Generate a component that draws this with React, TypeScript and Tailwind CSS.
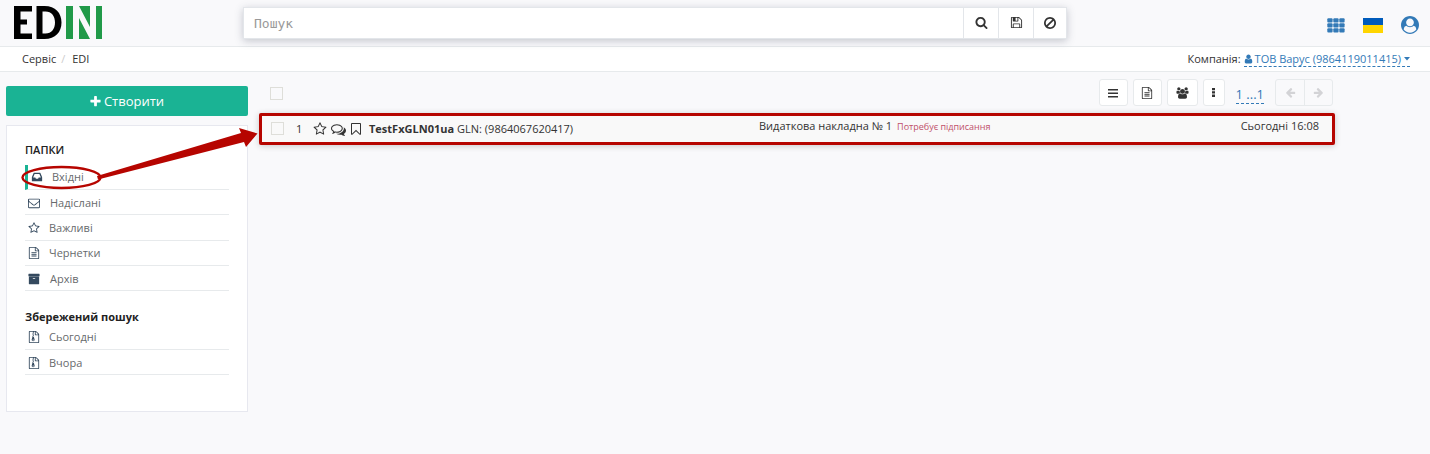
import React from "react";

const P = {
  search:
    "M1216 832q0-185-131.5-316.5t-316.5-131.5-316.5 131.5-131.5 316.5 131.5 316.5 316.5 131.5 316.5-131.5 131.5-316.5zm512 832q0 52-38 90t-90 38q-54 0-90-38l-343-342q-179 124-399 124-143 0-273.5-55.5t-225-150-150-225-55.5-273.5 55.5-273.5 150-225 225-150 273.5-55.5 273.5 55.5 225 150 150 225 55.5 273.5q0 220-124 399l343 343q37 37 37 90z",
  save: "M512 1536h768v-384h-768v384zm896 0h128v-896q0-14-10-38.5t-20-34.5l-281-281q-10-10-34-20t-39-10v416q0 40-28 68t-68 28h-576q-40 0-68-28t-28-68v-416h-128v1280h128v-416q0-40 28-68t68-28h832q40 0 68 28t28 68v416zm-384-928v-320q0-13-9.5-22.5t-22.5-9.5h-192q-13 0-22.5 9.5t-9.5 22.5v320q0 13 9.5 22.5t22.5 9.5h192q13 0 22.5-9.5t9.5-22.5zm640 32v928q0 40-28 68t-68 28h-1344q-40 0-68-28t-28-68v-1344q0-40 28-68t68-28h928q40 0 88 20t76 48l280 280q28 28 48 76t20 88z",
  ban: "M1440 893q0-161-87-295l-754 753q137 89 297 89 111 0 211.5-43.5t173.5-116.5 116-174.5 43-212.5zm-999 299l755-754q-135-91-300-91-148 0-273 73t-198 199-73 274q0 162 89 299zm1223-299q0 157-61 300t-163.5 246-245 164-298.5 61-298.5-61-245-164-163.5-246-61-300 61-299.5 163.5-245.5 245-164 298.5-61 298.5 61 245 164 163.5 245.5 61 299.5z",
  plus: "M1600 736v192q0 40-28 68t-68 28h-416v416q0 40-28 68t-68 28h-192q-40 0-68-28t-28-68v-416h-416q-40 0-68-28t-28-68v-192q0-40 28-68t68-28h416v-416q0-40 28-68t68-28h192q40 0 68 28t28 68v416h416q40 0 68 28t28 68z",
  user: "M1536 1399q0 109-62.5 187t-150.5 78h-854q-88 0-150.5-78t-62.5-187q0-85 8.5-160.5t31.5-152 58.5-131 94-89 134.5-34.5q131 128 313 128t313-128q76 0 134.5 34.5t94 89 58.5 131 31.5 152 8.5 160.5zm-256-887q0 159-112.5 271.5t-271.5 112.5-271.5-112.5-112.5-271.5 112.5-271.5 271.5-112.5 271.5 112.5 112.5 271.5z",
  star: "M1201 1004l306-297-422-62-189-382-189 382-422 62 306 297-73 421 378-199 377 199zm527-357q0 22-26 48l-363 354 86 500q1 7 1 20 0 50-41 50-19 0-40-12l-449-236-449 236q-22 12-40 12-21 0-31.5-14.5t-10.5-35.5q0-6 2-20l86-500-364-354q-25-27-25-48 0-37 56-46l502-73 225-455q19-41 49-41t49 41l225 455 502 73q56 9 56 46z",
  file: "M1596 380q28 28 48 76t20 88v1152q0 40-28 68t-68 28h-1344q-40 0-68-28t-28-68v-1600q0-40 28-68t68-28h896q40 0 88 20t76 48zm-444-244v376h376q-10-29-22-41l-313-313q-12-12-41-22zm384 1528v-1024h-416q-40 0-68-28t-28-68v-416h-768v1536h1280zM512 800q0-14 9-23t23-9h704q14 0 23 9t9 23v64q0 14-9 23t-23 9h-704q-14 0-23-9t-9-23zM1248 1024q14 0 23 9t9 23v64q0 14-9 23t-23 9h-704q-14 0-23-9t-9-23v-64q0-14 9-23t23-9zM1248 1280q14 0 23 9t9 23v64q0 14-9 23t-23 9h-704q-14 0-23-9t-9-23v-64q0-14 9-23t23-9z",
  zip: "M1596 380q28 28 48 76t20 88v1152q0 40-28 68t-68 28h-1344q-40 0-68-28t-28-68v-1600q0-40 28-68t68-28h896q40 0 88 20t76 48zm-444-244v376h376q-10-29-22-41l-313-313q-12-12-41-22zm384 1528v-1024h-416q-40 0-68-28t-28-68v-416h-128v128h-128v-128h-512v1536h1280zM640 256h128v128h-128zM768 384h128v128h-128zM640 512h128v128h-128zM768 640h128v128h-128zM640 768h128v128h110l106 360q10 36 10 60q0 92-68 156t-158 64t-158-64t-68-156q0-24 10-60l88-300zM768 1408q53 0 90.500-19t37.500-45t-37.500-45t-90.500-19t-90.500 19t-37.500 45t37.500 45t90.500 19z",
  archive:
    "M1088 832q0-26-19-45t-45-19h-256q-26 0-45 19t-19 45 19 45 45 19h256q26 0 45-19t19-45zm576-192v960q0 26-19 45t-45 19h-1408q-26 0-45-19t-19-45v-960q0-26 19-45t45-19h1408q26 0 45 19t19 45zm64-448v256q0 26-19 45t-45 19h-1536q-26 0-45-19t-19-45v-256q0-26 19-45t45-19h1536q26 0 45 19t19 45z",
  envelope:
    "M1664 1504v-768q-32 36-69 66-268 206-426 338-51 43-83 67t-86.500 48.500-102.500 24.500h-2q-48 0-102.500-24.500t-86.500-48.500-83-67q-158-132-426-338-37-30-69-66v768q0 13 9.500 22.500t22.500 9.500h1472q13 0 22.500-9.500t9.500-22.500zm0-1051v-24.500l-.5-13-3-12.500-5.500-9-9-7.500-14-2.500h-1472q-13 0-22.500 9.500t-9.500 22.500q0 168 147 284 193 152 401 317 6 5 35 29.500t46 37.500 44.500 31.500 50.500 27.500 43 9h2q20 0 43-9t50.500-27.500 44.500-31.500 46-37.500 35-29.500q208-165 401-317 54-43 100.500-115.500t46.500-131.500zm128-37v1088q0 66-47 113t-113 47h-1472q-66 0-113-47t-47-113v-1088q0-66 47-113t113-47h1472q66 0 113 47t47 113z",
  inbox:
    "M1151 960h316q-1-3-2.500-8t-2.500-8l-212-496h-708l-212 496q-1 2-2.500 8t-2.500 8h316l95 192h320zm513 30v482q0 26-19 45t-45 19h-1408q-26 0-45-19t-19-45v-482q0-62 25-123l238-552q10-25 36.500-42t52.500-17h832q26 0 52.500 17t36.500 42l238 552q25 61 25 123z",
  left: "M1664 896v128q0 53-32.500 90.500t-84.500 37.500h-704l293 294q38 36 38 90t-38 90l-75 76q-37 37-90 37-52 0-91-37l-651-652q-37-37-37-90 0-52 37-91l651-650q38-38 91-38 52 0 90 38l75 74q38 38 38 91t-38 91l-293 293h704q52 0 84.500 37.500t32.500 90.500z",
  bookmark:
    "M1408 256h-1024v1242l423-406 89-85 89 85 423 406v-1242zm12-128q23 0 44 9 33 13 52.500 41t19.500 62v1289q0 34-19.500 62t-52.500 41q-19 8-44 8-48 0-83-32l-441-424-441 424q-36 33-83 33-23 0-44-9-33-13-52.500-41t-19.500-62v-1289q0-34 19.500-62t52.500-41q21-9 44-9h1048z",
  comments:
    "M704 384q-153 0-286 52t-211.500 141-78.500 191q0 82 53 158t149 132l97 56-35 84q34-20 62-39l44-31 53 10q78 14 153 14 153 0 286-52t211.500-141 78.500-191-78.500-191-211.500-141-286-52zm0-128q191 0 353.500 68.500t256.500 186.500 94 257-94 257-256.500 186.500-353.500 68.500q-86 0-176-16-124 88-278 128-36 9-86 16h-3q-11 0-20.500-8t-11.500-21q-1-3-1-6.500t.5-6.500 2-6l2.500-5 3.500-5.500 4-5 4.500-5 4-4.500q5-6 23-25t26-29.500 22.500-29 25-38.500 20.500-44q-124-72-195-177t-71-224q0-139 94-257t256.500-186.500 353.500-68.500zm822 1169q10 24 20.500 44t25 38.500 22.500 29 26 29.500 23 25q1 1 4 4.500t4.500 5 4 5 3.500 5.500l2.500 5 2 6 .5 6.500-1 6.500q-3 14-13 22t-22 7q-50-7-86-16-154-40-278-128-90 16-176 16-271 0-472-132 58 4 88 4 161 0 309-45t264-129q125-92 192-212t67-254q0-77-23-152 129 71 204 178t75 230q0 120-71 224.500t-195 176.500z",
  account:
    "M1523 1339q-22-155-87.500-257.500t-184.500-118.500q-67 74-159.500 115.500t-195.500 41.500-195.500-41.500-159.500-115.500q-119 16-184.500 118.500t-87.500 257.500q106 150 271 237.500t356 87.500 356-87.500 271-237.500zm-243-699q0-159-112.500-271.500t-271.500-112.500-271.500 112.500-112.500 271.500 112.500 271.500 271.500 112.500 271.500-112.500 112.500-271.500zm512 256q0 182-71 347.500t-190.500 286-285.500 191.500-349 71-349-71-285.500-191.500-190.500-286-71-347.500 71-348 191-286 286-191 348-71 348 71 286 191 191 286 71 348z",
  group:
    "M657 896q-162 5-265 128h-134q-82 0-138-40.500t-56-118.500q0-353 124-353 6 0 43.500 21t97.500 42.500 119 21.500q67 0 133-23-5 37-5 66 0 139 81 256zm1071 637q0 120-73 189.500t-194 69.500h-874q-121 0-194-69.500t-73-189.500q0-53 3.500-103.500t14-109 26.500-108.500 43-97.500 62-81 85.500-53.500 111.500-20q10 0 43 21.500t73 48 107 48 135 21.500 135-21.500 107-48 73-48 43-21.500q61 0 111.500 20t85.500 53.500 62 81 43 97.500 26.500 108.500 14 109 3.500 103.500zm-1024-1277q0 106-75 181t-181 75-181-75-75-181 75-181 181-75 181 75 75 181zm704 384q0 159-112.500 271.500t-271.500 112.500-271.500-112.500-112.500-271.500 112.500-271.500 271.500-112.500 271.500 112.500 112.500 271.500zm576 225q0 78-56 118.500t-138 40.500h-134q-103-123-265-128 81-117 81-256 0-29-5-66 66 23 133 23 59 0 119-21.500t97.500-42.500 43.500-21q124 0 124 353zm-128-609q0 106-75 181t-181 75-181-75-75-181 75-181 181-75 181 75 75 181z",
};

function Icon({ d, className, box = "0 0 1792 1792" }: { d: string; className: string; box?: string }) {
  return (
    <svg viewBox={box} className={`shrink-0 fill-current ${className}`}>
      <path fillRule="evenodd" d={d} />
    </svg>
  );
}

function Logo() {
  return (
    <svg viewBox="0 0 88 33" className="h-[33px] w-[88px] shrink-0">
      <path d="M0 0h18v5.500H6.500v8H13v5H6.500v9H18V33H0z" />
      <path fillRule="evenodd" d="M22.500 0h8c11 0 17 7 17 16.500S41.500 33 30.500 33h-8zM28.500 5.500v22h3c6 0 9.500-4.500 9.500-11s-3.500-11-9.500-11z" />
      <path fill="#219a49" d="M52 0h7v33h-7zM65 0h11v21zM65 12l11 21H65zM82 0h6v33h-6z" />
    </svg>
  );
}

function FolderItem({ d, label, row, gap, active, icon = "size-[12px]" }: { d: string; label: string; row: string; gap: string; active?: boolean; icon?: string }) {
  return (
    <li className={`flex items-center border-b border-[#e7eaec] ${row} ${active ? "border-l-[3px] border-l-[#1ab394] pl-[3px]" : "pl-[3px]"}`}>
      <Icon d={d} className={`text-[#34495e] ${icon}`} />
      <span className={gap}>{label}</span>
    </li>
  );
}

const tool = "flex h-[27px] items-center justify-center rounded-[3px] border border-[#e7eaec] bg-white text-[#333]";
const find = "flex h-[30px] items-center justify-center border-l border-[#e3e6ea] bg-white text-[#333]";

export default function App() {
  return (
    <div className="relative h-[454px] w-[1430px] overflow-hidden bg-[#f9f9fb] font-['Open_Sans','Noto_Sans',sans-serif] text-[11px] leading-[16px] whitespace-nowrap text-[#333]">
      <header className="flex h-[47px] items-start border-b border-[#e7eaec] pt-[6px] pl-[14px]">
        <Logo />
        <div className="mt-[1px] ml-[141px] flex h-[32px] w-[824px] border border-[#e3e6ea] bg-white shadow-[0_2px_8px_rgba(60,70,90,0.28)]">
          <div className="flex-1 pl-[10px] font-['DejaVu_Sans_Mono',monospace] text-[13px] leading-[31px] text-[#999]">Пошук</div>
          <button className={`${find} w-[35px]`}><Icon d={P.search} className="mb-[1px] size-[13px]" /></button>
          <button className={`${find} w-[35px]`}><Icon d={P.save} className="mb-[1px] size-[13px]" /></button>
          <button className={`${find} w-[33px]`}><Icon d={P.ban} className="mb-[1px] size-[14px]" /></button>
        </div>
        <div className="mt-[8px] ml-[260px] flex items-center text-[#337ab7]">
          <svg viewBox="0 0 18 15" className="mt-[2px] h-[15px] w-[18px] fill-current">
            {[0, 5, 10].map((y) => [0, 6, 12].map((x) => <rect key={`${x}-${y}`} x={x + 0.3} y={y + 0.3} width="5.3" height="4.200" rx="1" />))}
          </svg>
          <span className="mt-[2px] ml-[18px] flex h-[15px] w-[20px] flex-col">
            <span className="h-[7px] bg-[#005bbb]" />
            <span className="h-[8px] bg-[#ffd500]" />
          </span>
          <Icon d={P.account} className="mt-[2px] ml-[18px] size-[18px]" />
        </div>
      </header>

      <div className="flex h-[25px] items-center border-b border-[#e7eaec] bg-white pr-[20px] pl-[22px]">
        <span>Сервіс</span>
        <span className="ml-[5px] text-[#ccc]">/</span>
        <span className="ml-[7px]">EDI</span>
        <span className="ml-auto">Компанія:</span>
        <a className="ml-[3px] flex h-[16px] items-center border-b border-dashed border-[#337ab7] text-[#337ab7]">
          <Icon d={P.user} box="128 128 1536 1536" className="h-[10px] w-[9px]" />
          <span className="ml-[2px]">ТОВ Варус (9864119011415)</span>
          <svg viewBox="0 0 6 4" className="ml-[3px] h-[4px] w-[6px] fill-current"><path d="M0 0h6L3 3.500z" /></svg>
        </a>
      </div>

      <div className="flex">
        <aside className="w-[254px] shrink-0 pt-[14px] pr-[6px] pl-[6px]">
          <button className="flex h-[30px] w-full items-center justify-center rounded-[2px] bg-[#1ab394] pr-[1px] text-[13px] text-white">
            <Icon d={P.plus} className="mr-[2px] size-[13px]" />
            Створити
          </button>
          <div className="mt-[9px] h-[287px] border border-[#e7e8ef] bg-white px-[18px] pt-[16px] text-[#676a6c]">
            <h2 className="mb-[7px] font-semibold text-[#222]">ПАПКИ</h2>
            <ul>
              <FolderItem d={P.inbox} label="Вхідні" row="h-[25px]" gap="ml-[9px]" active />
              <FolderItem d={P.envelope} label="Надіслані" row="h-[25px] pt-[2px]" gap="ml-[10px]" />
              <FolderItem d={P.star} label="Важливі" row="h-[26px]" gap="ml-[9px]" />
              <FolderItem d={P.file} label="Чернетки" row="h-[25px]" gap="ml-[9px]" />
              <FolderItem d={P.archive} label="Архів" row="h-[25px] pt-[2px]" gap="ml-[10px]" />
            </ul>
            <h2 className="mt-[18px] font-bold text-[#222]">Збережений пошук</h2>
            <ul>
              <FolderItem d={P.zip} label="Сьогодні" row="h-[25px]" gap="ml-[9px]" />
              <FolderItem d={P.zip} label="Вчора" row="h-[25px] pt-[2px]" gap="ml-[9px]" />
            </ul>
          </div>
        </aside>

        <main className="w-[1082px] pt-[7px] pl-[5px]">
          <div className="flex h-[27px] items-center pr-[3px] pl-[11px]">
            <span className="mt-[2px] size-[13px] border border-[#deded9]" />
            <button className={`${tool} ml-auto w-[29px]`}>
              <svg viewBox="0 0 10 9" className="mt-[1px] h-[9px] w-[10px] fill-current"><path d="M0 0h10v1.600H0zM0 3.500h10v1.600H0zM0 7h10v1.600H0z" /></svg>
            </button>
            <button className={`${tool} ml-[5px] w-[29px]`}><Icon d={P.file} className="size-[12px]" /></button>
            <button className={`${tool} ml-[5px] w-[31px]`}><Icon d={P.group} box="0 0 2048 1792" className="h-[12px] w-[13px]" /></button>
            <button className={`${tool} ml-[5px] w-[22px]`}>
              <svg viewBox="0 0 3 9" className="h-[9px] w-[3px] fill-current"><path d="M0 0h3v2.300H0zM0 3.300h3v2.300H0zM0 6.600h3V9H0z" /></svg>
            </button>
            <a className="mt-[5px] ml-[11px] h-[17px] border-b border-dashed border-[#337ab7] text-[13px] leading-[15px] text-[#337ab7]">1 ...1</a>
            <div className="ml-[11px] flex h-[27px] w-[58px] rounded-[3px] border border-[#e7eaec] text-[#d3d3d6]">
              <span className="flex w-[29px] items-center justify-center border-r border-[#e7eaec]"><Icon d={P.left} className="size-[11px]" /></span>
              <span className="flex flex-1 items-center justify-center"><Icon d={P.left} className="size-[11px] -scale-x-100" /></span>
            </div>
          </div>

          <div className="mt-[7px] flex h-[32px] w-[1076px] rounded-[2px] border-[3px] border-[#b60500] bg-[#f9f9f9] shadow-[0_1px_6px_rgba(0,0,0,0.2)]">
            <div className="flex w-[497px] items-center pl-[9px]">
              <span className="mb-[1px] size-[13px] border border-[#deded9]" />
              <span className="ml-[12px] w-[6px]">1</span>
              <Icon d={P.star} className="ml-[11px] size-[14px]" />
              <Icon d={P.comments} className="ml-[4px] size-[15px]" />
              <Icon d={P.bookmark} className="ml-[3px] size-[14px]" />
              <b className="ml-[6px] font-bold">TestFxGLN01ua</b>
              <span className="ml-[3px]">GLN: (9864067620417)</span>
            </div>
            <div className="flex flex-1 pt-[2px] pr-[13px]">
              <span>Видаткова накладна № 1</span>
              <span className="ml-[5px] text-[9px] leading-[17px] text-[#c0506a]">Потребує підписання</span>
              <span className="ml-auto">Сьогодні 16:08</span>
            </div>
          </div>
        </main>
      </div>

      <svg viewBox="0 0 270 80" className="pointer-events-none absolute top-[120px] left-0 h-[80px] w-[270px]">
        <ellipse cx="61.500" cy="57.500" rx="39" ry="10.500" fill="none" stroke="#b60500" strokeWidth="2.400" />
        <path d="M97 56L241 13L239 8L257.500 13.500L246 27L244 22L98 59.500z" fill="#b60500" />
      </svg>
    </div>
  );
}
